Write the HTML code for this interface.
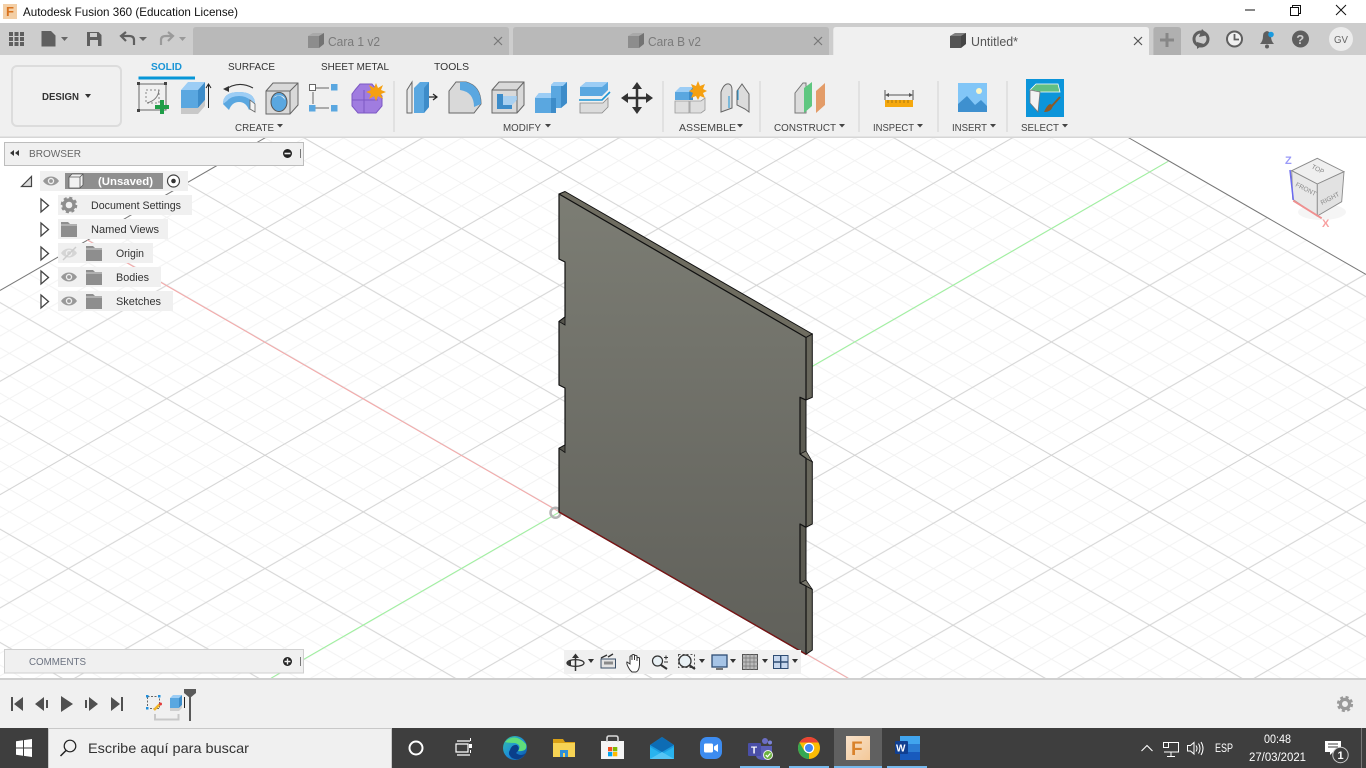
<!DOCTYPE html>
<html><head><meta charset="utf-8"><title>Autodesk Fusion 360</title>
<style>
html,body{margin:0;padding:0;background:#fff;width:1366px;height:768px;overflow:hidden}
svg{display:block;position:absolute;left:0;top:0}
text{font-family:"Liberation Sans",sans-serif}
.l{font-size:10.5px;fill:#444}
.t{font-size:10.5px;fill:#333}
</style></head><body>
<svg width="1366" height="768" viewBox="0 0 1366 768" xmlns="http://www.w3.org/2000/svg">
<defs>
<pattern id="g" patternUnits="userSpaceOnUse" x="363.3" y="172" width="196.6" height="113.3">
<path fill="none" stroke="#f2f2f2" stroke-width="1" d="M0 22.66L157.28 113.3M157.28 0L196.6 22.66M0 45.32L117.96 113.3M117.96 0L196.6 45.32M0 67.98L78.64 113.3M78.64 0L196.6 67.98M0 90.64L39.32 113.3M39.32 0L196.6 90.64M0 90.64L157.28 0M157.28 113.3L196.6 90.64M0 67.98L117.96 0M117.96 113.3L196.6 67.98M0 45.32L78.64 0M78.64 113.3L196.6 45.32M0 22.66L39.32 0M39.32 113.3L196.6 22.66"/>
<path fill="none" stroke="#d3d3d3" stroke-width="1" d="M0 0L196.6 113.3M0 113.3L196.6 0"/>
</pattern>
<linearGradient id="face" x1="0" y1="0" x2="0" y2="1"><stop offset="0" stop-color="#7c7d74"/><stop offset="1" stop-color="#60605a"/></linearGradient>
<linearGradient id="fus" x1="0" y1="0" x2="1" y2="1"><stop offset="0" stop-color="#f8e2ca"/><stop offset="1" stop-color="#f3c898"/></linearGradient>
<linearGradient id="edge" x1="0" y1="0" x2="1" y2="1"><stop offset="0" stop-color="#35c1a0"/><stop offset=".5" stop-color="#1d8fd8"/><stop offset="1" stop-color="#0c4f9e"/></linearGradient>
<g id="box"><path d="M0 3L5 0H16V11L11 15H0Z" fill="currentColor"/><path d="M0 3L5 0H16L11 3Z" fill="#fff" opacity=".25"/><path d="M11 3L16 0V11L11 15Z" fill="#000" opacity=".18"/></g>
<g id="fold"><path d="M0 1H7L9 3H16V16H0Z" fill="#8e8e8e"/><path d="M0 4H16" stroke="#f0f0f0" stroke-width=".7"/></g>
<g id="eye"><path d="M0 5C4 -1 12 -1 16 5C12 11 4 11 0 5Z" fill="#999"/><circle cx="8" cy="5" r="3.2" fill="#f0f0f0"/><circle cx="8" cy="5" r="1.9" fill="#999"/></g>
<g id="tri"><path d="M1 1L8.5 7.5L1 14Z" fill="#fff" stroke="#444" stroke-width="1.3"/></g>
<g id="car"><path d="M0 0H6L3 3.5Z" fill="#444"/></g>
</defs>

<!-- viewport grid -->
<rect x="0" y="137" width="1366" height="543" fill="#fff"/>
<path d="M0 291L266.5 137H1127.4L1366 274.5V680H0Z" fill="url(#g)"/>
<path d="M0 290.5L266.5 137" stroke="#777" stroke-width="1" fill="none"/>
<path d="M1127.4 137L1366 274.5" stroke="#777" stroke-width="1" fill="none"/>
<path d="M87.3 240L559.5 512L847.7 678" stroke="#f7a8a8" stroke-width="1" fill="none"/>
<path d="M271.3 678L559.5 512L1167.8 161.5" stroke="#9cf59c" stroke-width="1" fill="none"/>
<circle cx="555.5" cy="512.7" r="5" fill="none" stroke="#b5b5b5" stroke-width="2.5"/>

<!-- plate -->
<path d="M559 194L565 191.5L812.3 334L806 337.5Z" fill="#6e6c60" stroke="#111" stroke-width="1" stroke-linejoin="round"/>
<path d="M806 337.5L812.3 334V397.3L806 400Z" fill="#68675c" stroke="#111" stroke-width="1"/>
<path d="M800 397.3L806 400V458L800 454Z" fill="#5c5b52" stroke="#111" stroke-width="1"/>
<path d="M806 458.3L812.3 461.7V524L806 527.3Z" fill="#68675c" stroke="#111" stroke-width="1"/>
<path d="M800 454L806 451L812.3 461.7L806 458.3Z" fill="#77756a" stroke="#111" stroke-width=".7"/>
<path d="M800 524L806 527.3V586L800 583Z" fill="#5c5b52" stroke="#111" stroke-width="1"/>
<path d="M806 586L812.3 589.3V650L806 654.3Z" fill="#68675c" stroke="#111" stroke-width="1"/>
<path d="M800 583L806 580L812.3 589.3L806 586Z" fill="#77756a" stroke="#111" stroke-width=".7"/>
<path d="M559 194L806 337.5V400L800 397.3V454L806 458.3V527.3L800 524V583L806 586V654.3L559 512V448.3L565 445V388L559 385V321.5L565 317V262L559 259Z" fill="url(#face)" stroke="#111" stroke-width="1.2" stroke-linejoin="round"/>
<path d="M559 321.5L565 317V325ZM559 448.3L565 445V452.5Z" fill="#55544c" stroke="#111" stroke-width=".8"/>
<path d="M559 512L806 654.3" stroke="#7a1414" stroke-width="1.3" fill="none"/>

<!-- view cube -->
<ellipse cx="1322" cy="212" rx="24" ry="8" fill="#efefef" opacity=".6"/>
<path d="M1317.3 158.3L1344 171.7L1317.3 184L1291.7 170.7Z" fill="#efefef" stroke="#8a8a8a" stroke-width=".9"/>
<path d="M1291.7 170.7L1317.3 184V216L1292.7 199.3Z" fill="#e8e8e8" stroke="#8a8a8a" stroke-width=".9"/>
<path d="M1317.3 184L1344 171.7L1341.7 201.7L1317.3 216Z" fill="#e2e2e2" stroke="#8a8a8a" stroke-width=".9"/>
<path d="M1290 170L1293.3 200" stroke="#6a6af0" stroke-width="1.5"/>
<path d="M1293.3 200.7L1321.7 218.3" stroke="#f09090" stroke-width="1.8"/>
<text x="1285" y="164" style="font-size:11px;font-weight:bold;fill:#9a9af8">Z</text>
<text x="1322" y="227" style="font-size:11px;font-weight:bold;fill:#f8a0a0">X</text>
<text transform="translate(1311,168) rotate(28)" style="font-size:6.5px;fill:#888">TOP</text>
<text transform="translate(1295,186) rotate(27)" style="font-size:6.5px;fill:#888">FRONT</text>
<text transform="translate(1322,205) rotate(-28)" style="font-size:6.5px;fill:#888">RIGHT</text>

<!-- title bar -->
<rect x="0" y="0" width="1366" height="23" fill="#fff"/>
<rect x="3" y="4" width="14" height="15" fill="#f3cfa6"/>
<text x="6" y="16" style="font-size:13px;font-weight:bold;fill:#d9731f">F</text>
<text x="23" y="16" textLength="215" lengthAdjust="spacingAndGlyphs" style="font-size:12px;fill:#111">Autodesk Fusion 360 (Education License)</text>
<path d="M1245 10H1255" stroke="#111" stroke-width="1"/>
<path d="M1290.5 7.5H1298.5V15.5H1290.5ZM1292.5 7.5V5.5H1300.5V13.5H1298.5" fill="none" stroke="#111" stroke-width="1"/>
<path d="M1336 5L1346 15M1346 5L1336 15" stroke="#111" stroke-width="1"/>

<!-- tab bar -->
<rect x="0" y="23" width="1366" height="32" fill="#cdcdcd"/>
<path d="M193 55V30Q193 27 196 27H506Q509 27 509 30V55Z" fill="#b9b9b9"/>
<path d="M513 55V30Q513 27 516 27H826Q829 27 829 30V55Z" fill="#b9b9b9"/>
<path d="M833.3 55V30Q833.3 27 836 27H1146Q1149 27 1149 30V55Z" fill="#f0f0f0"/>
<path d="M1153.4 55V30Q1153.4 27 1156 27H1178Q1181 27 1181 30V55Z" fill="#b0b0b0"/>
<path d="M1160 40H1174M1167 33V47" stroke="#878787" stroke-width="3"/>
<g fill="#5e5e5e"><rect x="9" y="32" width="4" height="4"/><rect x="14.5" y="32" width="4" height="4"/><rect x="20" y="32" width="4" height="4"/><rect x="9" y="37" width="4" height="4"/><rect x="14.5" y="37" width="4" height="4"/><rect x="20" y="37" width="4" height="4"/><rect x="9" y="42" width="4" height="4"/><rect x="14.5" y="42" width="4" height="4"/><rect x="20" y="42" width="4" height="4"/></g>
<path d="M41.5 31H51L55.5 35.5V46.5H41.5Z" fill="#5f5f5f"/>
<path d="M61 37H68L64.5 41Z" fill="#666"/>
<path d="M87 32H98.5L101.5 35V46H87Z" fill="#5f5f5f"/><rect x="90" y="33" width="7" height="4" fill="#cdcdcd"/><rect x="90" y="40" width="8" height="6" fill="#cdcdcd"/>
<path d="M134 45V40Q134 36 129 36H122M126 32L121 36L126 41" fill="none" stroke="#5f5f5f" stroke-width="2.2"/>
<path d="M139 37H147L143 41Z" fill="#666"/>
<path d="M161 45V40Q161 36 166 36H172M168 32L173 36L168 41" fill="none" stroke="#9a9a9a" stroke-width="2.2"/>
<path d="M179 37H186L182.5 41Z" fill="#999"/>
<use href="#box" x="308" y="33" style="color:#8d8d8d"/>
<text x="328" y="46" textLength="52" lengthAdjust="spacingAndGlyphs" style="font-size:12.5px;fill:#7a7a7a">Cara 1 v2</text>
<path d="M494 37L502 45M502 37L494 45" stroke="#777" stroke-width="1.2"/>
<use href="#box" x="628" y="33" style="color:#8d8d8d"/>
<text x="648" y="46" textLength="53" lengthAdjust="spacingAndGlyphs" style="font-size:12.5px;fill:#7a7a7a">Cara B v2</text>
<path d="M814 37L822 45M822 37L814 45" stroke="#777" stroke-width="1.2"/>
<use href="#box" x="950" y="33" style="color:#555"/>
<text x="971" y="46" textLength="47" lengthAdjust="spacingAndGlyphs" style="font-size:12.5px;fill:#555">Untitled*</text>
<path d="M1134 37L1142 45M1142 37L1134 45" stroke="#555" stroke-width="1.2"/>
<!-- top right icons -->
<circle cx="1201" cy="39" r="7" fill="none" stroke="#5f5f5f" stroke-width="3"/><path d="M1202 29L1208 35L1199 37Z" fill="#5f5f5f"/><path d="M1204 44L1197 42V49Z" fill="#5f5f5f"/>
<circle cx="1234.5" cy="39" r="7.5" fill="#f0f0f0" stroke="#5f5f5f" stroke-width="2"/><path d="M1234.5 34V39.5H1239" fill="none" stroke="#5f5f5f" stroke-width="1.8"/>
<path d="M1260 44Q1263 41 1263 36Q1263 32 1267 31Q1271 32 1271 36Q1271 41 1274 44Z" fill="#5f5f5f"/><circle cx="1267" cy="46.5" r="2" fill="#5f5f5f"/><circle cx="1271" cy="34.5" r="2.8" fill="#1a9be0"/>
<circle cx="1300.5" cy="39" r="8.5" fill="#5f5f5f"/><text x="1296.3" y="44" style="font-size:13px;font-weight:bold;fill:#cdcdcd">?</text>
<circle cx="1341" cy="39" r="12" fill="#ececec"/><text x="1334" y="43" textLength="14" lengthAdjust="spacingAndGlyphs" style="font-size:10.5px;fill:#666">GV</text>

<!-- ribbon -->
<rect x="0" y="55" width="1366" height="82" fill="#f0f0f0"/>
<rect x="0" y="136.5" width="1366" height="1.5" fill="#d6d6d6"/>
<rect x="12" y="66" width="109" height="60" rx="5" fill="#f0f0f0" stroke="#dcdcdc" stroke-width="2"/>
<text x="42" y="100" textLength="37" lengthAdjust="spacingAndGlyphs" style="font-size:10.5px;fill:#333;font-weight:bold">DESIGN</text>
<path d="M85 94H91L88 98Z" fill="#333"/>
<text x="151" y="70" textLength="31" lengthAdjust="spacingAndGlyphs" style="font-size:10.5px;font-weight:bold;fill:#1a95d6">SOLID</text>
<rect x="138.5" y="76.5" width="56.5" height="3" fill="#0696d7"/>
<text class="t" x="228" y="70" textLength="47" lengthAdjust="spacingAndGlyphs">SURFACE</text>
<text class="t" x="321" y="70" textLength="68" lengthAdjust="spacingAndGlyphs">SHEET METAL</text>
<text class="t" x="434" y="70" textLength="35" lengthAdjust="spacingAndGlyphs">TOOLS</text>
<g stroke="#dcdcdc" stroke-width="1.5"><path d="M394 81V132M663 81V132M760 81V132M859 81V132M938 81V132M1007 81V132"/></g>
<text class="l" x="235" y="131" textLength="39" lengthAdjust="spacingAndGlyphs">CREATE</text><use href="#car" x="277" y="124"/>
<text class="l" x="503" y="131" textLength="38" lengthAdjust="spacingAndGlyphs">MODIFY</text><use href="#car" x="545" y="124"/>
<text class="l" x="679" y="131" textLength="57" lengthAdjust="spacingAndGlyphs">ASSEMBLE</text><use href="#car" x="737" y="124"/>
<text class="l" x="774" y="131" textLength="62" lengthAdjust="spacingAndGlyphs">CONSTRUCT</text><use href="#car" x="839" y="124"/>
<text class="l" x="873" y="131" textLength="41" lengthAdjust="spacingAndGlyphs">INSPECT</text><use href="#car" x="917" y="124"/>
<text class="l" x="952" y="131" textLength="35" lengthAdjust="spacingAndGlyphs">INSERT</text><use href="#car" x="990" y="124"/>
<text class="l" x="1021" y="131" textLength="38" lengthAdjust="spacingAndGlyphs">SELECT</text><use href="#car" x="1062" y="124"/>

<!-- sketch -->
<rect x="139" y="84" width="27" height="26" fill="none" stroke="#666" stroke-width="1"/>
<rect x="146" y="90" width="13" height="13" fill="none" stroke="#888" stroke-dasharray="2 2"/>
<path d="M147 103Q158 100 159 90" fill="none" stroke="#777"/>
<g fill="#444"><rect x="137" y="82" width="3" height="3"/><rect x="164" y="82" width="3" height="3"/><rect x="137" y="109" width="3" height="3"/></g>
<path d="M162 100V114M155 107H169" stroke="#1f9e48" stroke-width="4"/>
<!-- extrude -->
<path d="M181 90H198V108H181Z" fill="#5aa7e0"/><path d="M181 90L188 82H205L198 90Z" fill="#9ccdf5"/><path d="M198 90L205 82V100L198 108Z" fill="#3d8cc9"/><path d="M181 108H198L205 100V106L198 114H181Z" fill="#c8c8c8"/>
<path d="M208.5 108V85M206 88L208.5 84L211 88" fill="none" stroke="#222" stroke-width="1"/>
<!-- revolve -->
<path d="M223 104Q223 92 239 92Q255 92 255 104L249 110Q246 102 239 102Q232 102 229 110Z" fill="#5aa7e0"/>
<path d="M223 104Q223 92 239 92Q255 92 255 104L250 100Q246 96 239 96Q231 96 227 101Z" fill="#9ccdf5"/>
<path d="M225 90Q238 80 253 88" fill="none" stroke="#333"/><path d="M223 89L229 86V92Z" fill="#333"/>
<path d="M250 100L255 104V112L250 109Z" fill="#f4f4f4" stroke="#666" stroke-width=".8"/>
<!-- hole -->
<path d="M266 91L273 83H298V105L290 114H266Z" fill="#d9d9d9" stroke="#666"/><path d="M266 91H290V114M290 91L298 83" fill="none" stroke="#666"/>
<ellipse cx="279" cy="102" rx="8" ry="9.5" fill="#5aa7e0" stroke="#555"/><path d="M273 98Q279 92 285 100Q285 96 279 95Z" fill="#eee"/>
<!-- pattern -->
<path d="M315 88H329M315 108H329M313 92V104" stroke="#666" stroke-width="1"/>
<rect x="309.5" y="84.5" width="6" height="6" fill="#fff" stroke="#666"/>
<rect x="331" y="84" width="6.5" height="6.5" fill="#5aa7e0"/><rect x="309" y="105" width="6.5" height="6.5" fill="#5aa7e0"/><rect x="331" y="105" width="6.5" height="6.5" fill="#5aa7e0"/>
<!-- form -->
<path d="M355 90L360 84H372L382 96V106L376 113H358L352 106V94Z" fill="#a07ce0" stroke="#7d58c4" stroke-width="1"/><path d="M352 100H378M364 90V113" stroke="#7d58c4"/>
<path d="M376 83L378 88L383 85L381 90L386 92L381 94L383 99L378 96L376 101L374 96L369 99L371 94L366 92L371 90L369 85L374 88Z" fill="#f5a011"/>
<!-- press pull -->
<path d="M407 90L412 82V113H407Z" fill="#e8e8e8" stroke="#666"/><path d="M414 88L420 82H429V107L424 113H414Z" fill="#5aa7e0"/><path d="M424 88L429 82V107L424 113Z" fill="#3d8cc9"/><path d="M429 97H436M433 94L437 97L433 100" fill="none" stroke="#222" stroke-width="1.2"/>
<!-- fillet -->
<path d="M449 91L456 82H466Q481 86 481 104L474 113H449Z" fill="#d9d9d9" stroke="#666"/><path d="M460 82H466Q481 86 481 104L474 107Q474 92 460 90Z" fill="#5aa7e0"/>
<!-- shell -->
<path d="M492 90L499 82H524V105L517 113H492Z" fill="#d9d9d9" stroke="#666"/><path d="M492 90H517V113M517 90L524 82" fill="none" stroke="#666"/>
<path d="M497 94H503V105H512V109H497Z" fill="#3d8cc9"/><path d="M503 105H512L517 100V96H503Z" fill="#9ccdf5" opacity=".8"/>
<!-- combine -->
<path d="M535 98L539 93H551V85L554 82H567V103L561 108H556V113H535Z" fill="#5aa7e0"/><path d="M551 85L554 82H567L563 86H551Z" fill="#9ccdf5"/><path d="M563 86L567 82V103L561 108V86Z" fill="#3d8cc9"/><path d="M535 98L539 93H551V98Z" fill="#9ccdf5"/><path d="M551 98H556V113H551Z" fill="#3d8cc9"/>
<!-- split -->
<path d="M580 87L586 82H608V90L602 96H580Z" fill="#5aa7e0"/><path d="M580 87L586 82H608L602 87Z" fill="#9ccdf5"/>
<path d="M579 100H602L610 92" fill="none" stroke="#1a95d6" stroke-width="1.6"/>
<path d="M580 103H603L608 98V107L602 113H580Z" fill="#dcdcdc" stroke="#888" stroke-width=".8"/>
<!-- move -->
<path d="M637 86V110M625 98H649" stroke="#333" stroke-width="2.5"/><path d="M637 82L642 89H632ZM637 114L642 107H632ZM621 98L628 93V103ZM653 98L646 93V103Z" fill="#333"/>
<!-- assemble -->
<path d="M675 92L680 87H693L689 92Z" fill="#9ccdf5"/><path d="M675 92H689V100H675Z" fill="#5aa7e0"/><path d="M689 92L693 87V100H689Z" fill="#3d8cc9"/>
<path d="M675 101H689V113H675ZM690 101H701L705 98V110L701 113H690Z" fill="#dedede" stroke="#999" stroke-width=".8"/>
<path d="M698 81L700 86L705 84L703 89L707 91L703 93L705 98L700 96L698 100L696 96L691 98L693 93L689 91L693 89L691 84L696 86Z" fill="#f5a011"/>
<path d="M721 112V92Q724 83 729 84Q732 85 732 90V108ZM737 91L742 84L749 94V112L745 109L737 105Z" fill="#dcdcdc" stroke="#666"/><path d="M729 96V108M738 90V100" stroke="#1a95d6"/>
<!-- construct -->
<path d="M795 93L803 83H806V113H795Z" fill="#dcdcdc" stroke="#777"/><path d="M804 88L812 82V106L804 113Z" fill="#5fc780"/><path d="M816 91L825 83V105L816 113Z" fill="#e39c68"/>
<!-- inspect -->
<path d="M885 90V100M913 90V100M887 95H911" stroke="#555"/><path d="M885 95L889 93V97ZM913 95L909 93V97Z" fill="#555"/><rect x="885" y="100" width="28" height="7" fill="#f5a80e"/><path d="M888 100V103M892 100V103M896 100V103M900 100V103M904 100V103M908 100V103" stroke="#8a6510" stroke-width=".7"/>
<!-- insert -->
<rect x="958" y="83" width="29" height="29" fill="#82c6f7"/><circle cx="979" cy="91" r="3" fill="#fbf6c6"/><path d="M958 112V104L967 96L975 105L981 100L987 106V112Z" fill="#3e90cf"/>
<!-- select -->
<rect x="1026" y="79" width="38" height="38" fill="#0c95da"/>
<path d="M1030 90L1036 84L1058 84L1060 92H1040Z" fill="#62bf83" stroke="#fff" stroke-width=".8"/>
<path d="M1030 90L1040 92L1038 112L1030 103Z" fill="#f2f2f2" stroke="#777" stroke-width=".8"/>
<path d="M1060 97L1051 107" stroke="#8d5a27" stroke-width="2"/><path d="M1053 105Q1052 112 1044 112Q1047 105 1050 104Z" fill="#8d5a27"/>

<!-- browser -->
<rect x="4.5" y="142.5" width="299" height="23" fill="#f0f0f0" stroke="#bdbdbd"/>
<path d="M14 150V156L10 153ZM19 150V156L15 153Z" fill="#333"/>
<text x="29" y="157" textLength="52" lengthAdjust="spacingAndGlyphs" style="font-size:10.5px;fill:#666">BROWSER</text>
<circle cx="287.5" cy="153.5" r="4.5" fill="#222"/><rect x="284.5" y="152.7" width="6" height="1.6" fill="#f0f0f0"/>
<path d="M300.5 149V158" stroke="#777"/>
<path d="M21.5 186.5L31.5 176.5V186.5Z" fill="#ddd" stroke="#444" stroke-width="1.2"/>
<rect x="40" y="171" width="148" height="20" fill="#f0f0f0"/>
<use href="#eye" x="43" y="176"/>
<rect x="65" y="173" width="98" height="16" fill="#8f8f8f"/>
<path d="M69 177L72 174H83V185L80 188H69Z" fill="#f2f2f2" stroke="#555" stroke-width=".8"/><path d="M69 177H80V188M80 177L83 174" fill="none" stroke="#555" stroke-width=".8"/>
<text x="98" y="185" textLength="55" lengthAdjust="spacingAndGlyphs" style="font-size:11px;font-weight:bold;fill:#fff">(Unsaved)</text>
<circle cx="173.5" cy="181" r="6" fill="#fff" stroke="#444" stroke-width="1.2"/><circle cx="173.5" cy="181" r="2.3" fill="#333"/>

<rect x="58" y="195" width="134" height="20" fill="#f0f0f0"/>
<rect x="58" y="219" width="110" height="20" fill="#f0f0f0"/>
<rect x="58" y="243" width="95" height="20" fill="#f0f0f0"/>
<rect x="58" y="267" width="103" height="20" fill="#f0f0f0"/>
<rect x="58" y="291" width="115" height="20" fill="#f0f0f0"/>
<use href="#tri" x="40" y="198"/><use href="#tri" x="40" y="222"/><use href="#tri" x="40" y="246"/><use href="#tri" x="40" y="270"/><use href="#tri" x="40" y="294"/>
<circle cx="69" cy="205" r="5" fill="none" stroke="#8e8e8e" stroke-width="3.4"/><circle cx="69" cy="205" r="7" fill="none" stroke="#8e8e8e" stroke-width="2.6" stroke-dasharray="3 2.5"/>
<text x="91" y="209" textLength="90" lengthAdjust="spacingAndGlyphs" style="font-size:11px;fill:#333">Document Settings</text>
<use href="#fold" x="61" y="221"/>
<text x="91" y="233" textLength="68" lengthAdjust="spacingAndGlyphs" style="font-size:11px;fill:#333">Named Views</text>
<use href="#eye" x="61" y="248" opacity=".3"/><path d="M63 260L76 247" stroke="#ccc" stroke-width="1.4"/>
<use href="#fold" x="86" y="245"/>
<text x="116" y="257" textLength="28" lengthAdjust="spacingAndGlyphs" style="font-size:11px;fill:#333">Origin</text>
<use href="#eye" x="61" y="272"/><use href="#fold" x="86" y="269"/>
<text x="116" y="281" textLength="33" lengthAdjust="spacingAndGlyphs" style="font-size:11px;fill:#333">Bodies</text>
<use href="#eye" x="61" y="296"/><use href="#fold" x="86" y="293"/>
<text x="116" y="305" textLength="45" lengthAdjust="spacingAndGlyphs" style="font-size:11px;fill:#333">Sketches</text>

<!-- comments -->
<rect x="4.5" y="649.5" width="299" height="23.5" fill="#f0f0f0" stroke="#cfcfcf"/>
<text x="29" y="665" textLength="57" lengthAdjust="spacingAndGlyphs" style="font-size:10.5px;fill:#6b7280">COMMENTS</text>
<circle cx="287.5" cy="661.5" r="4.5" fill="#222"/><path d="M284.5 661.5H290.5M287.5 658.5V664.5" stroke="#f0f0f0" stroke-width="1.4"/>
<path d="M300.5 657V666" stroke="#777"/>

<!-- nav bar -->
<rect x="564" y="650" width="237" height="24" fill="#f0f0f0"/>
<path d="M575.5 656V671" stroke="#333" stroke-width="1.5"/><ellipse cx="575.5" cy="663" rx="8.5" ry="3.4" fill="none" stroke="#333" stroke-width="1.3"/><path d="M575.5 653.5L572 658H579ZM567 663L571 660V666Z" fill="#333"/>
<path d="M588 659H594L591 663Z" fill="#333"/>
<rect x="601" y="659" width="14.5" height="9" fill="#e4e4e4" stroke="#3c5068"/><rect x="604" y="661.5" width="9" height="3" fill="#8a8a8a"/><path d="M601 658L607 655M608 657L613 654" stroke="#333" stroke-width="1.4"/>
<path d="M630 670Q626 664 627 662L630 664V656.5Q631 655 632 656.5V660V655Q633.5 654 634.5 655V660V655.5Q636 655 637 656V661V658Q638.5 657 639.5 658V665Q639 671 636 672H632Z" fill="#fff" stroke="#333" stroke-width="1"/>
<circle cx="657.5" cy="661" r="5" fill="#e8f0f4" stroke="#333" stroke-width="1.2"/><path d="M661 665L667 669" stroke="#333" stroke-width="2"/><path d="M664 657.5H668M666 655.5V659.5M664 662H668" stroke="#333"/>
<rect x="678.5" y="654.5" width="16" height="13" fill="none" stroke="#555" stroke-dasharray="2 2"/><circle cx="685" cy="661" r="6" fill="#e8f0f4" stroke="#333" stroke-width="1.3"/><path d="M689 665L695 669" stroke="#333" stroke-width="2.2"/>
<path d="M699 659H705L702 663Z" fill="#333"/>
<rect x="712" y="655" width="15" height="12" fill="#a6c4e6" stroke="#2f4d74" stroke-width="1.3"/><path d="M716 669H723" stroke="#777" stroke-width="2"/>
<path d="M730 659H736L733 663Z" fill="#333"/>
<rect x="742.5" y="654.5" width="15" height="15" fill="#bbb" stroke="#555"/><path d="M746 654V670M750 654V670M754 654V670M742 658H758M742 662H758M742 666H758" stroke="#777" stroke-width=".7"/>
<path d="M762 659H768L765 663Z" fill="#333"/>
<rect x="773.5" y="655.5" width="14.5" height="13" fill="#c8d8ee" stroke="#2f4d74"/><path d="M780.7 655V669M773 662H788" stroke="#2f4d74" stroke-width="1.4"/>
<path d="M792 659H798L795 663Z" fill="#333"/>

<!-- bottom panel -->
<rect x="0" y="680" width="1366" height="48" fill="#f0f0f0"/>
<rect x="0" y="678" width="1366" height="2" fill="#d0d0d0"/>
<path d="M11 697H13V711H11ZM23 697V711L14 704Z" fill="#505050"/>
<path d="M44 697V711L35 704ZM46 700H48V708H46Z" fill="#505050"/>
<path d="M61 696L73 704L61 712Z" fill="#505050"/>
<path d="M85 700H87V708H85ZM89 697L98 704L89 711Z" fill="#505050"/>
<path d="M111 697L120 704L111 711ZM121 697H123V711H121Z" fill="#505050"/>
<rect x="147.5" y="696.5" width="12" height="12" fill="none" stroke="#666" stroke-dasharray="2 1.5"/>
<g fill="#1f8fdc"><rect x="146" y="695" width="2.5" height="2.5"/><rect x="158" y="695" width="2.5" height="2.5"/><rect x="146" y="707" width="2.5" height="2.5"/></g>
<path d="M154 710L160 704" stroke="#f0b428" stroke-width="2.6"/><circle cx="160.5" cy="704" r="1.5" fill="#e23b3b"/>
<path d="M170 698H179V708H170Z" fill="#5aa7e0"/><path d="M170 698L173 695H182L179 698Z" fill="#9ccdf5"/><path d="M179 698L182 695V705L179 708Z" fill="#3d8cc9"/><path d="M170 708H179L182 705V708L179 711H170Z" fill="#cfcfcf"/>
<path d="M184.5 708V697" stroke="#222"/>
<path d="M184 689H196V693L190 698L184 693Z" fill="#5a5a5a"/><rect x="189" y="696" width="2" height="25" fill="#5a5a5a"/>
<path d="M155 714V719.5H178.5V714" fill="none" stroke="#c8c8c8" stroke-width="2"/>
<circle cx="1345" cy="704" r="4.6" fill="none" stroke="#9a9a9a" stroke-width="3.2"/><circle cx="1345" cy="704" r="6.8" fill="none" stroke="#9a9a9a" stroke-width="2.6" stroke-dasharray="3 2.4"/>

<!-- taskbar -->
<rect x="0" y="728" width="1366" height="40" fill="#3e3e3e"/>
<path d="M16 741.3L23 740.3V747.5H16ZM24 740.1L32 739V747.5H24ZM16 748.5H23V755.7L16 754.7ZM24 748.5H32V757L24 755.9Z" fill="#fff"/>
<rect x="48.5" y="728.5" width="343" height="40" fill="#f0f0f0" stroke="#c8c8c8"/>
<circle cx="70" cy="746" r="5.8" fill="none" stroke="#222" stroke-width="1.2"/><path d="M66 750.5L60.5 756" stroke="#222" stroke-width="1.5"/>
<text x="88" y="753" textLength="161" lengthAdjust="spacingAndGlyphs" style="font-size:14px;fill:#333">Escribe aquí para buscar</text>
<circle cx="416" cy="748" r="6.5" fill="none" stroke="#fff" stroke-width="2"/>
<path d="M457 741H470M457 755H470M456 744H468V752H456Z" fill="none" stroke="#fff" stroke-width="1.2"/><rect x="469" y="744" width="3" height="4" fill="#fff"/><path d="M470.5 750V753M470.5 738V741" stroke="#fff"/>
<!-- edge -->
<circle cx="515" cy="748" r="12" fill="url(#edge)"/><path d="M505 742Q515 732 526 744Q528 752 518 751Q522 745 515 743Q508 743 505 742Z" fill="#5fdc7c"/><path d="M510 750Q512 744 517 745Q521 749 516 753Q521 757 526 753Q520 762 512 758Q507 754 510 750Z" fill="#0a3f8a"/>
<!-- explorer -->
<path d="M553 739H563L565 742H575V757H553Z" fill="#d9a015"/><path d="M553 743H575V757H553Z" fill="#f7d354"/><rect x="560" y="750" width="8" height="7" fill="#2d8fd8"/><rect x="563" y="753" width="2" height="4" fill="#f7d354"/>
<!-- store -->
<path d="M601 741H624V759H601Z" fill="#f5f5f5"/><path d="M607 742V738Q607 736 609 736H616Q618 736 618 738V742" fill="none" stroke="#d8d8d8" stroke-width="1.6"/>
<rect x="608" y="747" width="4.3" height="4.3" fill="#f25022"/><rect x="613" y="747" width="4.3" height="4.3" fill="#7fba00"/><rect x="608" y="752" width="4.3" height="4.3" fill="#00a4ef"/><rect x="613" y="752" width="4.3" height="4.3" fill="#ffb900"/>
<!-- mail -->
<path d="M650 745L662 737L674 745V759H650Z" fill="#1a9be0"/><path d="M650 745L662 737L674 745L662 752Z" fill="#0d6cb4"/><path d="M650 747L662 754L674 747V759H650Z" fill="#29b3ee"/><path d="M650 759L662 752L674 759Z" fill="#55c5f5"/>
<!-- zoom -->
<rect x="700" y="737" width="22" height="22" rx="7" fill="#3d8cf0"/><rect x="704" y="743.5" width="9" height="9" rx="1.5" fill="#fff"/><path d="M714 746.5L718 744V752L714 749.5Z" fill="#fff"/>
<!-- teams -->
<circle cx="765" cy="741" r="3" fill="#6b6ec4"/><circle cx="770" cy="742.5" r="2" fill="#7b83d8"/><path d="M756 746H772V755Q772 760 764 760Q756 760 756 755Z" fill="#5b5fb8"/><rect x="748" y="743" width="13" height="13" rx="1" fill="#4a4fa8"/><text x="751" y="753.5" style="font-size:10px;font-weight:bold;fill:#fff">T</text>
<circle cx="768" cy="755" r="5" fill="#f0f0f0"/><circle cx="768" cy="755" r="4" fill="#6cb33f"/><path d="M765.8 755L767.4 756.8L770.4 753.4" fill="none" stroke="#fff" stroke-width="1.2"/>
<!-- chrome -->
<circle cx="809" cy="748" r="11" fill="#fbbc05"/>
<path d="M799.5 742.5A11 11 0 0 1 818.5 742.5L809 742.5Z" fill="#ea4335"/><path d="M799.5 742.5L804.2 750.8L809 748L809 759A11 11 0 0 1 799.5 742.5Z" fill="#34a853"/>
<circle cx="809" cy="748" r="5.3" fill="#fff"/><circle cx="809" cy="748" r="4" fill="#4285f4"/>
<!-- fusion -->
<rect x="834" y="728" width="48" height="40" fill="#606060"/>
<rect x="846" y="736" width="24" height="24" fill="url(#fus)"/>
<text x="851" y="755" style="font-size:19px;font-weight:bold;fill:#d9822b">F</text>
<!-- word -->
<path d="M900 736H920V760H900Z" fill="#185abd"/><path d="M900 736H920V744H900Z" fill="#41a5ee"/><path d="M900 744H920V752H900Z" fill="#2b7cd3"/>
<rect x="895" y="741" width="13" height="13" rx="1" fill="#103f91"/><text x="896" y="751.5" style="font-size:10px;font-weight:bold;fill:#fff">W</text>
<g fill="#76b9ed"><rect x="740" y="766" width="40" height="2"/><rect x="789" y="766" width="40" height="2"/><rect x="834" y="766" width="48" height="2"/><rect x="887" y="766" width="40" height="2"/></g>
<!-- tray -->
<path d="M1141.5 751L1147 745.5L1152.5 751" fill="none" stroke="#fff" stroke-width="1.1"/>
<path d="M1166.5 742.5H1178.5V752H1164M1171 752V756M1167 756.5H1175" fill="none" stroke="#fff" stroke-width="1"/><rect x="1163.5" y="742.5" width="5" height="5" fill="#3e3e3e" stroke="#fff"/>
<path d="M1187.5 745.5H1190.5L1194 742.5V754L1190.5 751H1187.5Z" fill="none" stroke="#fff"/><path d="M1196 745.5Q1198 748.5 1196 751.5M1198.5 743.5Q1201.5 748.5 1198.5 753.5M1201 742Q1205 748.5 1201 755" fill="none" stroke="#fff"/>
<text x="1215" y="752" textLength="18" lengthAdjust="spacingAndGlyphs" style="font-size:11.5px;fill:#fff">ESP</text>
<text x="1264" y="743" textLength="27" lengthAdjust="spacingAndGlyphs" style="font-size:11.5px;fill:#fff">00:48</text>
<text x="1249" y="761" textLength="57" lengthAdjust="spacingAndGlyphs" style="font-size:11.5px;fill:#fff">27/03/2021</text>
<path d="M1325 741H1341V752H1333L1330 755V752H1325Z" fill="#fff"/><path d="M1328 744H1338M1328 747H1338" stroke="#3e3e3e"/>
<circle cx="1340.5" cy="755" r="7.7" fill="#3e3e3e" stroke="#ccc" stroke-width="1"/>
<text x="1337.5" y="759" style="font-size:11px;font-weight:bold;fill:#fff">1</text>
<path d="M1361.5 728V768" stroke="#777"/>
</svg>
</body></html>
